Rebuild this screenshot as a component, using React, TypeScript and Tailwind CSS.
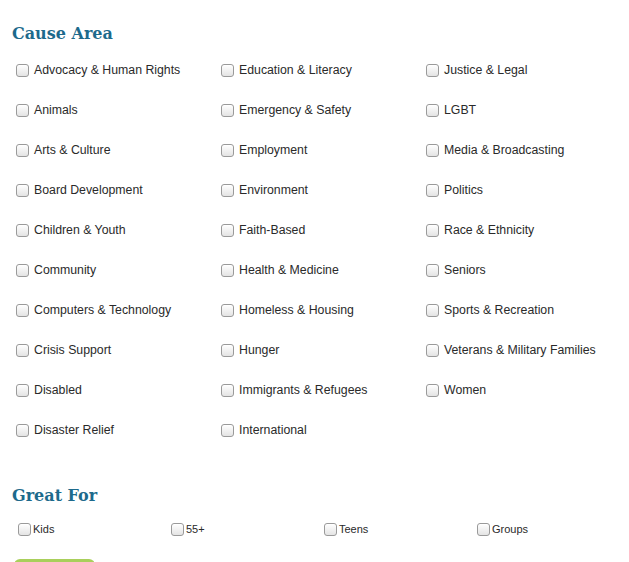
import React from "react";

const causes = [
  ["Advocacy & Human Rights", "Education & Literacy", "Justice & Legal"],
  ["Animals", "Emergency & Safety", "LGBT"],
  ["Arts & Culture", "Employment", "Media & Broadcasting"],
  ["Board Development", "Environment", "Politics"],
  ["Children & Youth", "Faith-Based", "Race & Ethnicity"],
  ["Community", "Health & Medicine", "Seniors"],
  ["Computers & Technology", "Homeless & Housing", "Sports & Recreation"],
  ["Crisis Support", "Hunger", "Veterans & Military Families"],
  ["Disabled", "Immigrants & Refugees", "Women"],
  ["Disaster Relief", "International", ""],
];

function Box() {
  return (
    <span className="inline-block w-[13px] h-[13px] rounded-[3px] border border-[#9a9a9a] bg-gradient-to-b from-white to-[#e4e4e4] shrink-0 shadow-[inset_0_1px_0_#fff]" />
  );
}

export default function App() {
  const flat = causes.flat();
  return (
    <div className="w-[629px] h-[562px] bg-white overflow-hidden relative" style={{ fontFamily: '"Liberation Sans", Arial, sans-serif' }}>
      <h2
        className="absolute left-[12px] top-[22px] text-[16px] font-bold text-[#1d6a8c] leading-[24px]"
        style={{ fontFamily: '"DejaVu Serif", serif' }}
      >
        Cause Area
      </h2>
      <div className="pt-[50px] pl-[16px] grid grid-cols-[205px_205px_205px]">
        {flat.map((c, i) => (
          <div key={i} className="h-[40px] flex items-center gap-[5px] text-[12.3px] text-[#2a2a2a]">
            {c && (
              <>
                <Box />
                <span>{c}</span>
              </>
            )}
          </div>
        ))}
      </div>
      <h2
        className="mt-[34px] ml-[12px] text-[16px] font-bold text-[#1d6a8c] leading-[24px]"
        style={{ fontFamily: '"DejaVu Serif", serif' }}
      >
        Great For
      </h2>
      <div className="mt-[13px] pl-[18px] grid grid-cols-[153px_153px_153px_153px] text-[11px] text-[#2a2a2a]">
        {["Kids", "55+", "Teens", "Groups"].map((g) => (
          <div key={g} className="flex items-center gap-[2px] h-[16px]">
            <Box />
            <span>{g}</span>
          </div>
        ))}
      </div>
      <div className="mt-[22px] ml-[14px] w-[81px] h-[10px] rounded-t-[6px] bg-[#a9cf5b]" />
    </div>
  );
}
